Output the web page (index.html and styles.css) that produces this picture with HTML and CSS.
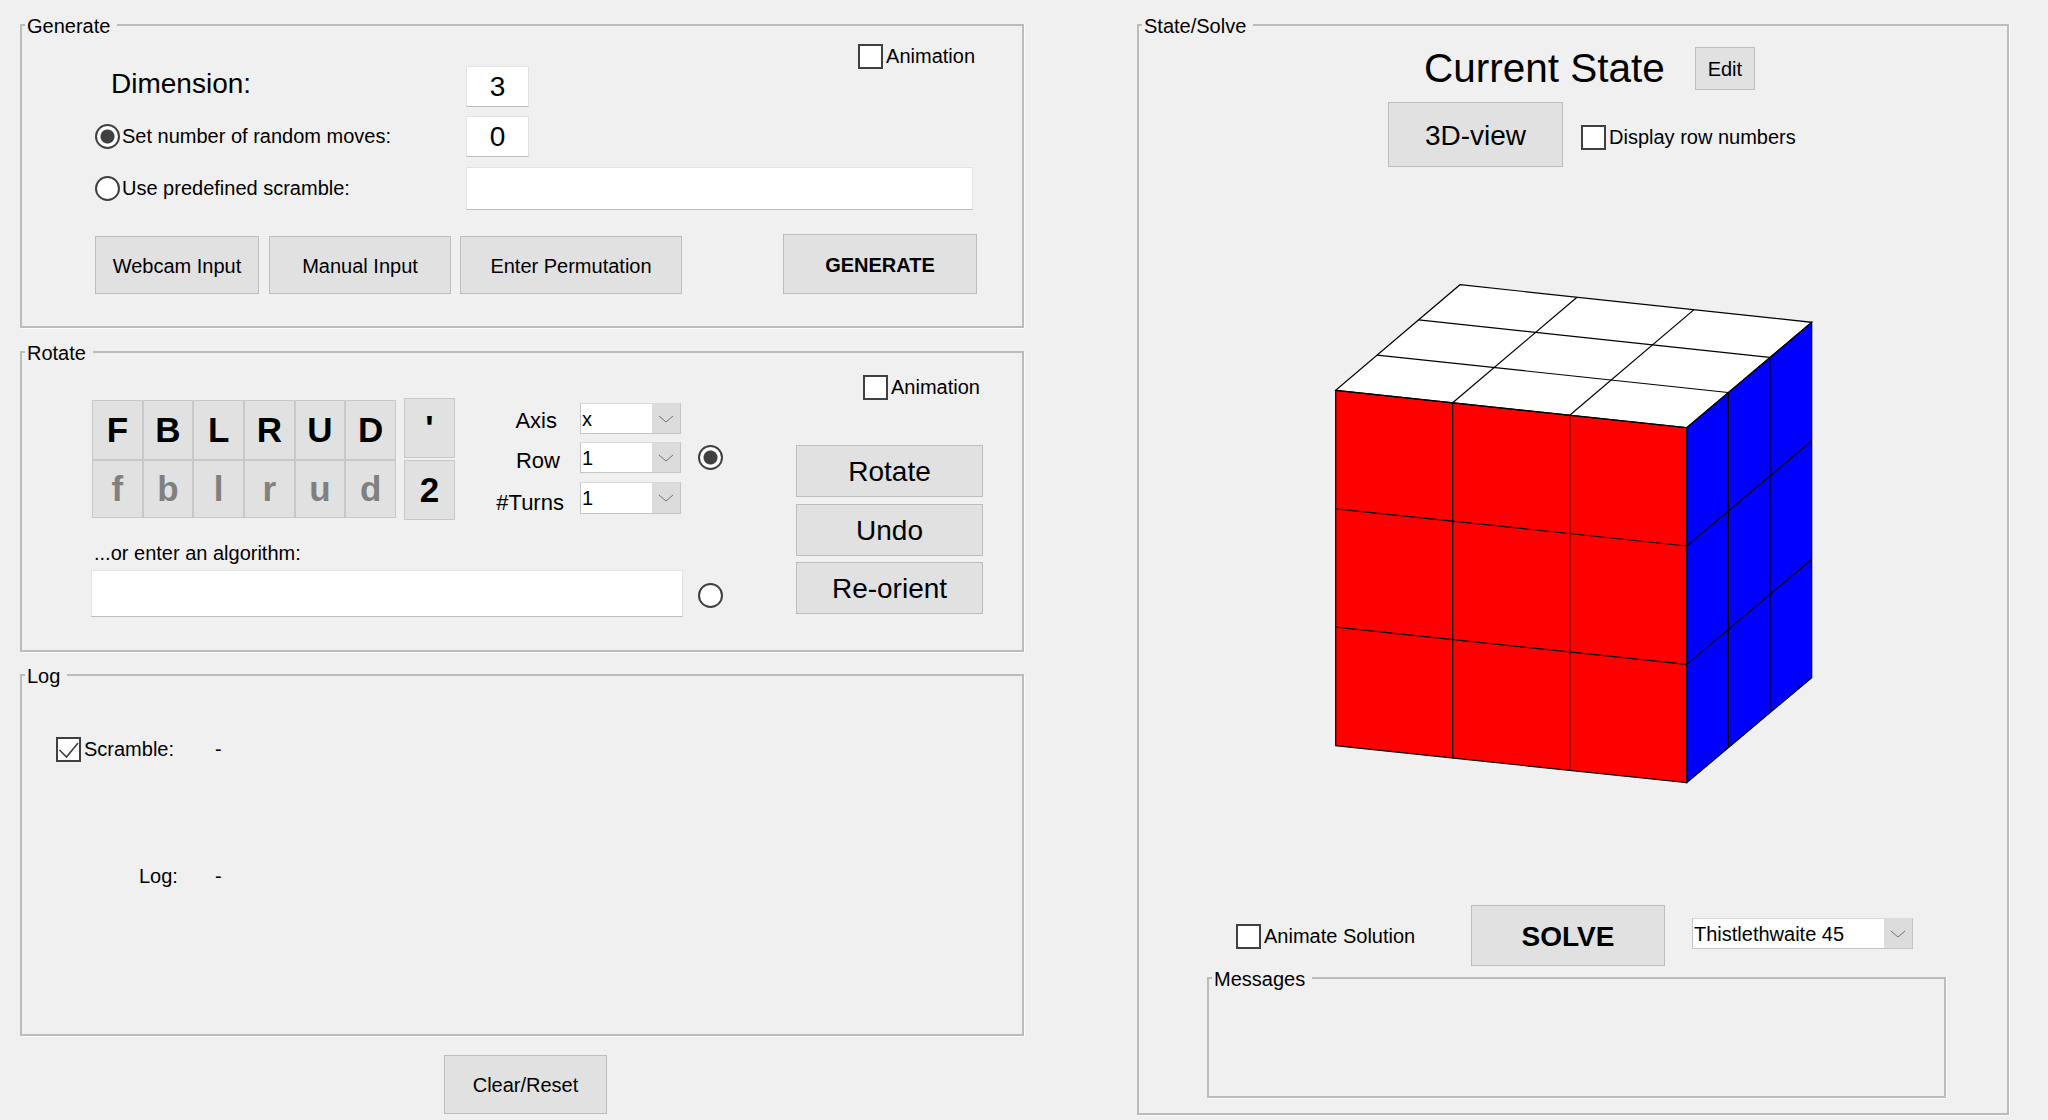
FILE: index.html
```html
<!DOCTYPE html>
<html lang="en">
<head>
  <meta charset="UTF-8" />
  <title>Rubik's Cube</title>
  <link rel="stylesheet" href="styles.css">
</head>
<body>

  <div class="left-col">

    <!-- Generate -->
    <div class="group generate">
      <span class="group-title">Generate</span>

      <div class="gen-head">
        <div class="gen-dim">
          <span class="dim-label">Dimension:</span>
          <input class="box box-num" type="text" value="3">
        </div>
        <label class="tick tick-gen"><span class="check"></span>Animation</label>
      </div>

      <div class="gen-row gen-moves">
        <label class="tick gen-label"><span class="radio radio-on"></span>Set number of random moves:</label>
        <input class="box box-num" type="text" value="0">
      </div>

      <div class="gen-row gen-scramble">
        <label class="tick gen-label"><span class="radio"></span>Use predefined scramble:</label>
        <input class="box box-scramble" type="text">
      </div>

      <div class="gen-buttons">
        <button class="btn btn-webcam">Webcam Input</button>
        <button class="btn btn-manual">Manual Input</button>
        <button class="btn btn-perm">Enter Permutation</button>
        <button class="btn btn-generate">GENERATE</button>
      </div>
    </div>

    <!-- Rotate -->
    <div class="group rotate">
      <span class="group-title">Rotate</span>

      <div class="rot-main">
        <div class="rot-top">
          <div class="moves">
            <button class="move">F</button>
            <button class="move">B</button>
            <button class="move">L</button>
            <button class="move">R</button>
            <button class="move">U</button>
            <button class="move">D</button>
            <button class="move move-wide">f</button>
            <button class="move move-wide">b</button>
            <button class="move move-wide">l</button>
            <button class="move move-wide">r</button>
            <button class="move move-wide">u</button>
            <button class="move move-wide">d</button>
          </div>

          <div class="mods">
            <button class="move mod">'</button>
            <button class="move mod">2</button>
          </div>

          <div class="axis-form">
            <div class="axis-row">
              <span class="axis-label label-axis">Axis</span>
              <div class="combo combo-small">
                <span class="combo-text">x</span>
                <span class="combo-arrow"><svg width="16" height="8" viewBox="0 0 16 8"><path d="M1 1l7 6 7-6" fill="none" stroke="#707070"/></svg></span>
              </div>
            </div>
            <div class="axis-row">
              <span class="axis-label label-row">Row</span>
              <div class="combo combo-small">
                <span class="combo-text">1</span>
                <span class="combo-arrow"><svg width="16" height="8" viewBox="0 0 16 8"><path d="M1 1l7 6 7-6" fill="none" stroke="#707070"/></svg></span>
              </div>
            </div>
            <div class="axis-row">
              <span class="axis-label label-turns">#Turns</span>
              <div class="combo combo-small combo-tall">
                <span class="combo-text">1</span>
                <span class="combo-arrow"><svg width="16" height="8" viewBox="0 0 16 8"><path d="M1 1l7 6 7-6" fill="none" stroke="#707070"/></svg></span>
              </div>
            </div>
          </div>

          <span class="radio radio-on radio-axis"></span>
        </div>

        <div class="alg-label">...or enter an algorithm:</div>
        <div class="alg-row">
          <input class="box box-alg" type="text">
          <span class="radio radio-alg"></span>
        </div>
      </div>

      <div class="rot-side">
        <label class="tick tick-rot"><span class="check"></span>Animation</label>
        <button class="btn side-btn">Rotate</button>
        <button class="btn side-btn">Undo</button>
        <button class="btn side-btn">Re-orient</button>
      </div>
    </div>

    <!-- Log -->
    <div class="group log">
      <span class="group-title">Log</span>
      <div class="log-row">
        <label class="tick log-label"><span class="check"><svg width="21" height="21" viewBox="0 0 21 21"><path d="M1.5 11l7 7L20 4" fill="none" stroke="#404040" stroke-width="1.6"/></svg></span>Scramble:</label>
        <span>-</span>
      </div>
      <div class="log-row log-row-2">
        <span class="log-label-2">Log:</span>
        <span>-</span>
      </div>
    </div>

    <button class="btn btn-clear">Clear/Reset</button>
  </div>

  <!-- State/Solve -->
  <div class="group state">
    <span class="group-title">State/Solve</span>

    <div class="state-head">
      <span class="state-title">Current State</span>
      <button class="btn btn-edit">Edit</button>
    </div>

    <div class="state-view">
      <button class="btn btn-view">3D-view</button>
      <label class="tick tick-rows"><span class="check"></span>Display row numbers</label>
    </div>

    <svg class="cube" width="484" height="506" viewBox="1332 281 484 506">
      <polygon points="1335.7,390.3 1686.7,427.7 1686.7,782.7 1335.7,745.7" fill="#ff0000"/>
      <polygon points="1686.7,427.7 1811.7,322.3 1811.7,677.7 1686.7,782.7" fill="#0000ff"/>
      <polygon points="1460,284.7 1811.7,322.3 1686.7,427.7 1335.7,390.3" fill="#ffffff"/>
      <g fill="none" stroke="#000" stroke-width="1.2">
        <!-- front -->
        <polygon points="1335.7,390.3 1686.7,427.7 1686.7,782.7 1335.7,745.7"/>
        <line x1="1452.7" y1="402.8" x2="1452.7" y2="758"/>
        <line x1="1569.7" y1="415.2" x2="1569.7" y2="770.4"/>
        <line x1="1335.7" y1="508.8" x2="1686.7" y2="546"/>
        <line x1="1335.7" y1="627.2" x2="1686.7" y2="664.4"/>
        <!-- top -->
        <polygon points="1460,284.7 1811.7,322.3 1686.7,427.7 1335.7,390.3"/>
        <line x1="1377.1" y1="355.1" x2="1728.1" y2="392.5"/>
        <line x1="1418.6" y1="319.9" x2="1769.6" y2="357.4"/>
        <line x1="1452.7" y1="402.8" x2="1577" y2="297.2"/>
        <line x1="1569.7" y1="415.2" x2="1694" y2="309.6"/>
        <!-- right -->
        <polygon points="1686.7,427.7 1811.7,322.3 1811.7,677.7 1686.7,782.7"/>
        <line x1="1728.4" y1="392.5" x2="1728.4" y2="747.7"/>
        <line x1="1770" y1="357.4" x2="1770" y2="712.7"/>
        <line x1="1686.7" y1="546" x2="1811.7" y2="440.8"/>
        <line x1="1686.7" y1="664.4" x2="1811.7" y2="559.3"/>
      </g>
    </svg>

    <div class="solve-row">
      <label class="tick tick-solve"><span class="check"></span>Animate Solution</label>
      <button class="btn btn-solve">SOLVE</button>
      <div class="combo combo-algo">
        <span class="combo-text">Thistlethwaite 45</span>
        <span class="combo-arrow"><svg width="16" height="8" viewBox="0 0 16 8"><path d="M1 1l7 6 7-6" fill="none" stroke="#707070"/></svg></span>
      </div>
    </div>

    <div class="group messages">
      <span class="group-title">Messages</span>
    </div>
  </div>

</body>
</html>
```

FILE: styles.css
```css
* {
  box-sizing: border-box;
}

html, body {
  margin: 0;
  height: 1120px;
  overflow: hidden;
}

body {
  display: flex;
  align-items: flex-start;
  padding: 24px 0 0 20px;
  background-color: #f0f0f0;
  font-family: "Liberation Sans", Arial, sans-serif;
  font-size: 20px;
  color: #000;
}

.left-col {
  width: 1004px;
  flex-shrink: 0;
}

/* group boxes */
.group {
  position: relative;
  border: 2px solid #bcbcbc;
  box-shadow: 1px 1px 0 #fbfbfb;
}

.group-title {
  position: absolute;
  top: -11px;
  left: 3px;
  padding: 0 7px 0 2px;
  background-color: #f0f0f0;
  line-height: 23px;
}

/* common controls */
.btn {
  display: block;
  flex-shrink: 0;
  padding: 2px 0 0;
  background-color: #e1e1e1;
  border: 1px solid #bdbdbd;
  font-family: inherit;
  font-size: 20px;
  color: #000;
}

.box {
  display: block;
  flex-shrink: 0;
  padding: 0;
  background-color: #fff;
  border: 1px solid #e2e2e2;
  border-bottom-color: #bdbdbd;
  font-family: inherit;
  text-align: center;
}

.box-num {
  width: 63px;
  height: 41px;
  font-size: 28px;
}

.tick {
  display: flex;
  align-items: center;
}

.check {
  display: flex;
  align-items: center;
  justify-content: center;
  width: 25px;
  height: 25px;
  margin-right: 3px;
  flex-shrink: 0;
  background-color: #fff;
  border: 2px solid #404040;
}

.radio {
  display: block;
  width: 25px;
  height: 25px;
  margin-right: 2px;
  flex-shrink: 0;
  background-color: #fff;
  border: 2px solid #404040;
  border-radius: 50%;
}

.radio-on {
  background: radial-gradient(circle, #404040 0, #404040 6.5px, #fff 7.5px);
}

.combo {
  display: flex;
  background-color: #fff;
  border: 1px solid #c4c4c4;
  border-top-color: #d8d8d8;
}

.combo-text {
  flex: 1;
  padding: 4px 0 0 1px;
}

.combo-arrow {
  display: flex;
  align-items: center;
  justify-content: center;
  width: 28px;
  background-color: #dcdcdc;
}

/* Generate */
.generate {
  height: 304px;
  padding: 18px 45px 0 73px;
}

.gen-head {
  display: flex;
  align-items: flex-start;
}

.gen-dim {
  display: flex;
  align-items: center;
  margin-top: 22px;
}

.dim-label {
  width: 371px;
  padding: 0 0 5px 16px;
  font-size: 28px;
}

.tick-gen {
  margin-left: auto;
  margin-right: 2px;
}

.gen-row {
  display: flex;
  align-items: center;
}

.gen-moves {
  margin-top: 9px;
}

.gen-scramble {
  margin-top: 10px;
}

.gen-label {
  width: 371px;
}

.box-scramble {
  width: 507px;
  height: 43px;
}

.gen-buttons {
  display: flex;
  align-items: flex-end;
  height: 60px;
  margin-top: 24px;
}

.btn-webcam {
  width: 164px;
  height: 58px;
}

.btn-manual {
  width: 182px;
  height: 58px;
  margin-left: 10px;
}

.btn-perm {
  width: 222px;
  height: 58px;
  margin-left: 9px;
}

.btn-generate {
  width: 194px;
  height: 60px;
  margin-left: 101px;
  font-weight: bold;
}

/* Rotate */
.rotate {
  display: flex;
  height: 301px;
  margin-top: 23px;
  padding: 22px 0 0 69px;
}

.rot-main {
  width: 632px;
  padding-top: 23px;
}

.rot-top {
  display: flex;
  align-items: flex-start;
}

.moves {
  display: grid;
  grid-template-columns: repeat(6, 50.67px);
  grid-template-rows: 60px 58px;
  margin: 2px 0 0 1px;
}

.move {
  padding: 0;
  background-color: #e1e1e1;
  border: 1px solid #c8c8c8;
  font-family: inherit;
  font-size: 35px;
  font-weight: bold;
  color: #000;
}

.move-wide {
  color: #808080;
}

.mods {
  display: flex;
  flex-direction: column;
  gap: 2px;
  margin-left: 8px;
}

.mod {
  width: 51px;
  height: 60px;
}

.axis-form {
  margin-top: 5px;
}

.axis-row {
  display: flex;
  align-items: flex-start;
  height: 31px;
  margin-bottom: 8px;
}

.axis-row:nth-child(2) {
  margin-bottom: 9px;
}

.axis-label {
  width: 125px;
  padding-top: 5px;
  font-size: 22px;
  line-height: 25px;
  text-align: right;
}

.label-axis {
  padding-right: 23px;
}

.label-row {
  padding-top: 6px;
  padding-right: 20px;
}

.label-turns {
  padding-top: 8px;
  padding-right: 16px;
}

.combo-small {
  width: 101px;
  height: 31px;
}

.combo-tall {
  height: 32px;
}

.radio-axis {
  margin: 47px 0 0 17px;
}

.alg-label {
  margin-top: 21px;
  padding-left: 3px;
  line-height: 23px;
}

.alg-row {
  display: flex;
  align-items: flex-start;
  margin-top: 5px;
}

.box-alg {
  width: 592px;
  height: 47px;
}

.radio-alg {
  margin: 13px 0 0 15px;
}

.rot-side {
  width: 187px;
  margin-left: 73px;
}

.tick-rot {
  margin-left: 67px;
  white-space: nowrap;
}

.side-btn {
  width: 187px;
  height: 52px;
  margin-top: 7px;
  font-size: 28px;
}

.tick-rot + .side-btn {
  margin-top: 45px;
}

.side-btn:last-child {
  margin-top: 6px;
}

/* Log */
.log {
  height: 362px;
  margin-top: 22px;
  padding: 61px 0 0 34px;
}

.log-row {
  display: flex;
  align-items: center;
}

.log-label {
  width: 159px;
}

.log-row-2 {
  margin-top: 103px;
  line-height: 23px;
}

.log-label-2 {
  width: 76px;
  margin-left: 83px;
}

.btn-clear {
  width: 163px;
  height: 59px;
  margin: 19px 0 0 424px;
}

/* State/Solve */
.state {
  width: 872px;
  height: 1091px;
  margin-left: 113px;
  flex-shrink: 0;
  padding-top: 21px;
}

.state-head {
  display: flex;
  align-items: center;
  height: 43px;
  padding-left: 285px;
}

.state-title {
  font-size: 40.5px;
  line-height: 43px;
}

.btn-edit {
  width: 60px;
  height: 43px;
  margin-left: 30px;
}

.state-view {
  display: flex;
  align-items: flex-start;
  margin-top: 12px;
  padding-left: 249px;
}

.btn-view {
  width: 175px;
  height: 65px;
  font-size: 28px;
}

.tick-rows {
  margin: 23px 0 0 18px;
}

.cube {
  display: block;
  margin: 114px 0 0 193px;
}

.solve-row {
  display: flex;
  align-items: flex-start;
  margin-top: 118px;
  padding-left: 97px;
}

.tick-solve {
  width: 235px;
  margin-top: 19px;
}

.btn-solve {
  width: 194px;
  height: 61px;
  font-size: 28px;
  font-weight: bold;
}

.combo-algo {
  width: 221px;
  height: 31px;
  margin: 13px 0 0 27px;
}

.messages {
  width: 739px;
  height: 121px;
  margin: 11px 0 0 68px;
}
```
